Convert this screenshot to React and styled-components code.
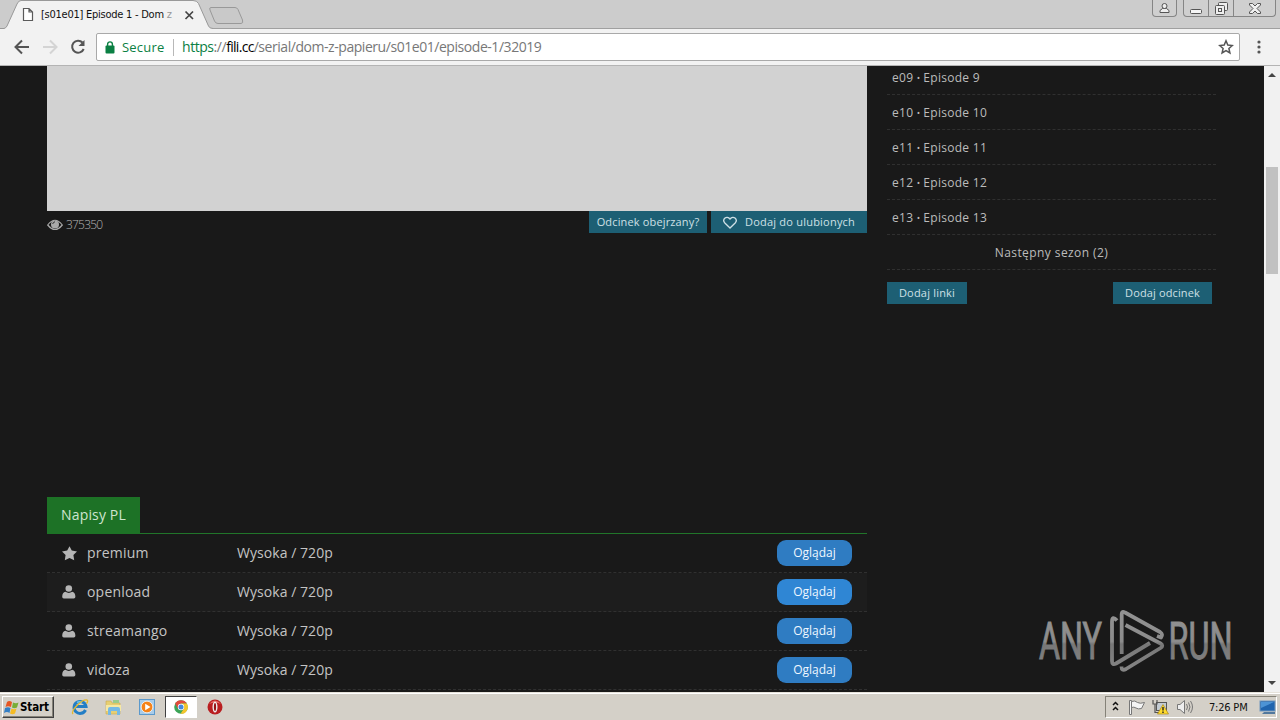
import React from 'react';
import styled, { createGlobalStyle } from 'styled-components';

const GlobalStyle = createGlobalStyle`
  * { box-sizing: border-box; }
  body { margin: 0; overflow: hidden; font-family: "Open Sans", sans-serif; }
  svg { display: block; flex: none; }
`;

const Screen = styled.div`
  width: 1280px;
  height: 720px;
  display: flex;
  flex-direction: column;
  overflow: hidden;
  background: #191919;
`;

/* Browser chrome */
const TabStrip = styled.div`
  position: relative;
  flex: none;
  height: 29px;
  display: flex;
  background: #cccccc;
  border-bottom: 1px solid #a0a0a0;
`;
const Tab = styled.div`
  position: relative;
  width: 213px;
  height: 29px;
  flex: none;
  display: flex;
  align-items: center;
  padding: 0 0 0 22px;
`;
const TabShape = styled.svg`
  position: absolute;
  left: 0;
  top: 0;
`;
const TabIcon = styled.svg`
  position: relative;
`;
const TabTitle = styled.span`
  position: relative;
  margin-left: 7px;
  width: 143px;
  white-space: nowrap;
  font: 11px "DejaVu Sans Condensed", "DejaVu Sans", sans-serif;
  letter-spacing: -0.25px;
  color: #111;
`;
const Faded = styled.span`
  color: #999;
`;
const NewTab = styled.svg`
  margin: 5px 0 0 -5px;
`;
const WindowButtons = styled.div`
  margin-left: auto;
  display: flex;
  height: 17px;
  padding-right: 4px;
`;
const WindowButton = styled.div`
  width: ${(p) => p.$w}px;
  height: 17px;
  display: flex;
  align-items: center;
  justify-content: center;
  border: 1px solid #858585;
  border-top: 0;
  border-left-width: ${(p) => (p.$joined ? 0 : 1)}px;
  border-radius: ${(p) => p.$radius || '0'};
  margin-right: ${(p) => p.$gap || 0}px;
  background: #cfcfcf;
`;

const Toolbar = styled.div`
  flex: none;
  height: 37px;
  display: flex;
  align-items: center;
  padding: 0 14px 0 13px;
  background: #f2f2f2;
  border-bottom: 1px solid #b4b4b4;
`;
const NavIcons = styled.div`
  display: flex;
  gap: 10px;
  width: 83px;
`;
const Omnibox = styled.div`
  width: 1144px;
  height: 28px;
  display: flex;
  align-items: center;
  padding: 0 5px 0 8px;
  background: #fff;
  border: 1px solid #a9a9a9;
  border-radius: 2px;
  font: 14px/18px "Open Sans", sans-serif;
`;
const Secure = styled.span`
  margin: -1px 0 0 7px;
  width: 51px;
  font-size: 13px;
  letter-spacing: 0.2px;
  color: #0b8043;
`;
const Separator = styled.i`
  width: 1px;
  height: 17px;
  background: #b8b8b8;
`;
const Url = styled.span`
  margin: -1px 0 0 8px;
  flex: 1;
  color: #777;
  white-space: nowrap;
  letter-spacing: -0.45px;
`;
const Scheme = styled.span`
  color: #0b8043;
`;
const Host = styled.span`
  color: #000;
  letter-spacing: -0.7px;
`;
const MenuIcon = styled.svg`
  margin-left: 17px;
`;

/* Page */
const Viewport = styled.div`
  flex: none;
  height: 626px;
  display: flex;
  overflow: hidden;
`;
const Page = styled.div`
  position: relative;
  width: 1264px;
  height: 626px;
  display: flex;
  gap: 20px;
  padding-left: 47px;
  overflow: hidden;
  background: #191919;
`;
const Main = styled.main`
  width: 820px;
  flex: none;
`;
const Player = styled.div`
  height: 145px;
  background: #d2d2d2;
`;
const PlayerBar = styled.div`
  height: 286px;
  display: flex;
  align-items: flex-start;
`;
const Views = styled.div`
  margin: 5px auto 0 0;
  display: flex;
  align-items: center;
  gap: 3px;
  color: #b4b4b4;
  font: 300 12px/18px "Open Sans", sans-serif;
  letter-spacing: -0.8px;
`;
const TealButton = styled.div`
  width: ${(p) => p.$w}px;
  height: 22px;
  margin-left: ${(p) => p.$ml || 0}px;
  padding-bottom: 2px;
  display: flex;
  align-items: center;
  justify-content: center;
  gap: 8px;
  background: #1d5f74;
  color: #cfe0e6;
  font-size: 11px;
  letter-spacing: ${(p) => p.$ls || 0}px;
  white-space: nowrap;
`;
const HeartIcon = styled.svg`
  margin-top: 2px;
`;
const Tabs = styled.div`
  height: 37px;
  display: flex;
  border-bottom: 1px solid #21752a;
`;
const LanguageTab = styled.div`
  width: 93px;
  height: 37px;
  padding-bottom: 2px;
  display: flex;
  align-items: center;
  justify-content: center;
  background: #1d7226;
  color: #cfe5cf;
  font-size: 14px;
  letter-spacing: 0.15px;
`;
const SourceRow = styled.div`
  height: 39px;
  display: flex;
  align-items: center;
  padding: 0 15px;
  border-bottom: 1px dashed #303030;
  background: ${(p) => (p.$alt ? '#1d1d1d' : 'transparent')};
  color: #c4c4c4;
  font-size: 14px;
`;
const SourceName = styled.span`
  margin: -2px 0 0 10px;
  width: 150px;
  letter-spacing: 0.2px;
`;
const Quality = styled.span`
  flex: 1;
  margin-top: -2px;
  letter-spacing: 0.05px;
`;
const WatchButton = styled.div`
  width: 75px;
  height: 26px;
  border-radius: 9px;
  padding-bottom: 1px;
  display: flex;
  align-items: center;
  justify-content: center;
  background: ${(p) => (p.$bright ? '#2f86d4' : '#2f7cc2')};
  color: #f0f7ff;
  font-size: 12px;
`;

const Sidebar = styled.aside`
  width: 329px;
  flex: none;
  margin-top: -6px;
`;
const Episode = styled.div`
  height: 35px;
  display: flex;
  align-items: center;
  justify-content: ${(p) => (p.$center ? 'center' : 'flex-start')};
  padding: 0 0 0 ${(p) => (p.$center ? 0 : 5)}px;
  border-bottom: 1px dashed #303030;
  color: #bcbcbc;
  font-size: 12px;
  letter-spacing: ${(p) => (p.$center ? 0.42 : 0.28)}px;
  white-space: pre;
`;
const Bullet = styled.span`
  font-size: 9px;
  letter-spacing: -0.2px;
`;
const SidebarActions = styled.div`
  display: flex;
  justify-content: space-between;
  padding: 12px 4px 0 0;
`;
const Watermark = styled.svg`
  position: absolute;
  left: 1034px;
  top: 540px;
`;
const ScrollTrack = styled.div`
  width: 16px;
  height: 626px;
  display: flex;
  flex-direction: column;
  align-items: center;
  justify-content: space-between;
  background: #f1f1f1;
  padding: 7px 0 7px;
`;
const ScrollThumb = styled.div`
  width: 12px;
  height: 107px;
  margin: 90px 0 auto;
  background: #c1c1c1;
`;

/* Taskbar */
const Taskbar = styled.div`
  flex: none;
  height: 28px;
  display: flex;
  align-items: center;
  padding: 2px 3px 0 2px;
  background: #d4d0c8;
  box-shadow: inset 0 1px #e6e2da, inset 0 2px #fff;
`;
const StartButton = styled.div`
  width: 52px;
  height: 22px;
  display: flex;
  align-items: center;
  padding-left: 1px;
  gap: 1px;
  background: #d4d0c8;
  border: 1px solid;
  border-color: #fff #404040 #404040 #fff;
  box-shadow: inset -1px -1px #858278;
  font: bold 11.5px "DejaVu Sans Condensed", "DejaVu Sans", sans-serif;
  letter-spacing: -0.1px;
  color: #000;
`;
const QuickLaunch = styled.div`
  display: flex;
  align-items: center;
  margin-left: 17px;
`;
const TaskIcon = styled.div`
  width: ${(p) => (p.$active ? 32 : 18)}px;
  height: 22px;
  margin-right: ${(p) => p.$gap}px;
  display: flex;
  align-items: center;
  justify-content: center;
  background: ${(p) => (p.$active ? '#fff' : 'transparent')};
  border: ${(p) => (p.$active ? '1px solid' : '0')};
  border-color: #404040 #fff #fff #404040;
`;
const Tray = styled.div`
  width: 172px;
  height: 22px;
  margin-left: auto;
  display: flex;
  align-items: center;
  padding-left: 6px;
  border: 1px solid;
  border-color: #858278 #fff #fff #858278;
`;
const TrayIcon = styled.svg`
  margin-left: ${(p) => p.$ml}px;
`;
const Clock = styled.span`
  width: 51px;
  margin-left: 15px;
  font: 11px "DejaVu Sans Condensed", "DejaVu Sans", sans-serif;
  letter-spacing: -0.2px;
  white-space: nowrap;
  color: #111;
`;

const UserIcon = () => (
  <svg width="15" height="14" viewBox="0 0 15 14" fill="#b5b5b5">
    <circle cx="6.800" cy="3.500" r="3.300" />
    <path d="M.2 11.800C.2 8.500 1.500 7.300 3.400 6.800Q6.800 9 10.200 6.800C12.100 7.300 13.400 8.500 13.400 11.800Q13.400 13.500 11.800 13.500H1.800Q.2 13.500 .2 11.800Z" />
  </svg>
);
const StarIcon = () => (
  <svg width="15" height="15" viewBox="0 0 15 15" fill="#b5b5b5">
    <path d="M7.5 .2L9.800 4.600L15 5.400L11.400 9L12.200 14.200L7.500 11.900L2.800 14.200L3.600 9L0 5.400L5.200 4.600Z" />
  </svg>
);
const Arrow = ({ up }) => (
  <svg width="8" height="4" viewBox="0 0 8 4">
    <path d={up ? 'M0 4L4 0L8 4Z' : 'M0 0L4 4L8 0Z'} fill="#454545" />
  </svg>
);

const episodes = [9, 10, 11, 12, 13];
const sources = ['premium', 'openload', 'streamango', 'vidoza'];

function BrowserTabs() {
  return (
    <TabStrip>
      <Tab>
        <TabShape width="214" height="29">
          <path d="M0 28.5H4Q6 28 7 26L17 4Q18.500 .5 21 .5H193Q197 .5 198.500 3.500L208.500 26Q209.500 28.500 213 28.500V29H0Z" fill="#f2f2f2" />
          <path d="M0 28.5H4Q6 28 7 26L17 4Q18.500 .5 21 .5H193Q197 .5 198.500 3.500L208.500 26Q209.500 28.500 213 28.500" fill="none" stroke="#999" />
        </TabShape>
        <TabIcon width="12" height="15" viewBox="0 0 12 15" fill="#fff" stroke="#5a5a5a" strokeWidth="1.2">
          <path d="M1.500 1.500H7L10.500 5V13.500H1.500ZM7 1.500V5H10.500" />
        </TabIcon>
        <TabTitle>[s01e01] Episode 1 - Dom <Faded>z</Faded></TabTitle>
        <TabIcon width="10" height="10" viewBox="0 0 10 10">
          <path d="M1.500 1.500L9 9M9 1.500L1.500 9" stroke="#444" strokeWidth="1.7" />
        </TabIcon>
      </Tab>
      <NewTab width="37" height="20">
        <path d="M3 2.500H27Q29 2.500 30 4.500L34.500 15Q35.500 18.500 33 18.500H10Q7.500 18.500 6.500 16L2 5Q1 2.500 3 2.500Z" fill="#c9c9c9" stroke="#999" />
      </NewTab>
      <WindowButtons>
        <WindowButton $w={25} $gap={6} $radius="0 0 4px 4px">
          <svg width="11" height="12" viewBox="0 0 11 12" fill="#eee" stroke="#555">
            <path d="M1 10.500V8.500L3.500 6.500H7.500L10 8.500V10.500Z" />
            <circle cx="5.500" cy="4" r="2.500" />
          </svg>
        </WindowButton>
        <WindowButton $w={26} $radius="0 0 0 4px">
          <svg width="12" height="12"><rect x=".5" y="7.500" width="11" height="4" rx="1" fill="#f4f4f4" stroke="#555" /></svg>
        </WindowButton>
        <WindowButton $w={25} $joined>
          <svg width="13" height="13" fill="#eee" stroke="#555">
            <rect x="3.500" y=".5" width="9" height="8" rx="1" />
            <rect x=".5" y="3.500" width="9" height="9" rx="1" />
            <rect x="3.500" y="6.500" width="3" height="3" />
          </svg>
        </WindowButton>
        <WindowButton $w={42} $joined $radius="0 0 4px 0">
          <svg width="12" height="11" viewBox="0 0 12 11">
            <path d="M.5 .5H3.500L6 3L8.500 .5H11.500V2L8 5.500L11.500 9V10.500H8.500L6 8L3.500 10.500H.5V9L4 5.500L.5 2Z" fill="#f0f0f0" stroke="#555" />
          </svg>
        </WindowButton>
      </WindowButtons>
    </TabStrip>
  );
}

function AddressBar() {
  return (
    <Toolbar>
      <NavIcons>
        <svg width="18" height="18" fill="none" stroke="#555" strokeWidth="2"><path d="M16 9H3M9 2.500L2.500 9L9 15.500" /></svg>
        <svg width="18" height="18" fill="none" stroke="#d4d4d4" strokeWidth="2"><path d="M2 9H15M9 2.500L15.500 9L9 15.500" /></svg>
        <svg width="18" height="18" fill="none" stroke="#555" strokeWidth="2"><path d="M13.500 4.500A6 6 0 1 0 14.700 11" /><path d="M15.500 2V8H9.500Z" fill="#555" stroke="none" /></svg>
      </NavIcons>
      <Omnibox>
        <svg width="10" height="13" viewBox="0 0 10 13">
          <rect x=".5" y="4.500" width="9" height="8" rx="1" fill="#0b8043" />
          <path d="M2.600 5V3.300A2.400 2.400 0 0 1 7.400 3.300V5" fill="none" stroke="#0b8043" strokeWidth="1.400" />
        </svg>
        <Secure>Secure</Secure>
        <Separator />
        <Url><Scheme>https</Scheme>://<Host>fili.cc</Host>/serial/dom-z-papieru/s01e01/episode-1/32019</Url>
        <svg width="16" height="16" viewBox="0 0 16 16"><path d="M8 1.800L9.800 6.100L14.300 6.500L10.900 9.500L11.900 14L8 11.600L4.100 14L5.100 9.500L1.700 6.500L6.200 6.100Z" fill="none" stroke="#555" strokeWidth="1.500" /></svg>
      </Omnibox>
      <MenuIcon width="4" height="14" fill="#555">
        <circle cx="2" cy="2" r="1.600" /><circle cx="2" cy="7" r="1.600" /><circle cx="2" cy="12" r="1.600" />
      </MenuIcon>
    </Toolbar>
  );
}

function AnyRunMark() {
  return (
    <Watermark width="222" height="75">
      <defs>
        <linearGradient id="metal" gradientUnits="userSpaceOnUse" x1="0" y1="5" x2="0" y2="64">
          <stop offset="0" stopColor="#929292" />
          <stop offset=".52" stopColor="#8c8c8c" />
          <stop offset=".56" stopColor="#777" />
          <stop offset="1" stopColor="#858585" />
        </linearGradient>
      </defs>
      <g fill="url(#metal)" fontFamily="Roboto, sans-serif" fontSize="51" fontWeight="400" stroke="url(#metal)" strokeWidth="1">
        <text x="5" y="53" textLength="63" lengthAdjust="spacingAndGlyphs">ANY</text>
        <text x="134.500" y="53" textLength="64" lengthAdjust="spacingAndGlyphs">RUN</text>
      </g>
      <g fill="none" stroke="url(#metal)" strokeWidth="3.800" strokeLinejoin="round">
        <path d="M83 14.500Q78 9 78 16V55Q78 59.500 82 57.500L116 37" />
        <path d="M87.700 48V8Q87.700 4.500 91 6.500L126 26Q129.500 28.500 127 31.500L123 30" />
        <path d="M91.500 19L126.500 37.500Q130 39.500 126.500 42L92 63Q87.500 65.500 87.500 60.500" />
      </g>
    </Watermark>
  );
}

function WindowsTaskbar() {
  return (
    <Taskbar>
      <StartButton>
        <svg width="15" height="15" viewBox="0 0 15 15">
          <path d="M3 2Q5 0 8 2L7 7Q4 5.500 1.500 7Z" fill="#e65622" />
          <path d="M9 2.500Q12 4 14.500 2.500L13 7.500Q10 9 8 7.500Z" fill="#77ad36" />
          <path d="M1 8Q4 6.500 6.500 8L5.500 13Q3 11 0 13Z" fill="#347fc5" />
          <path d="M7.500 8.500Q10 10 12.500 8.500L11 13.500Q8.500 15 6 13.500Z" fill="#f5bb23" />
        </svg>
        Start
      </StartButton>
      <QuickLaunch>
        <TaskIcon $gap={15}>
          <svg width="18" height="18" viewBox="0 0 18 18" fill="none">
            <path d="M14.500 12A6 6 0 1 1 15 8.500H5" stroke="#237ec5" strokeWidth="3" />
            <path d="M6 4.500A5 5 0 0 1 11 4.500" stroke="#67c5ef" strokeWidth="1.500" />
            <path d="M2 16C-1 13 11 1 16 2Q17.500 3 15.500 5.500" stroke="#e5b82b" strokeWidth="1.300" />
          </svg>
        </TaskIcon>
        <TaskIcon $gap={16}>
          <svg width="17" height="17" viewBox="0 0 17 17">
            <path d="M1 2H6L7 4H15V15H1Z" fill="#e7cf72" stroke="#c9aa4d" strokeWidth=".6" />
            <path d="M8 1H14V4H8Z" fill="#9acb8b" />
            <path d="M1 6H16V12H1Z" fill="#f6e8a2" />
            <path d="M3 16V10Q3 8 5 8H13Q15 8 15 10V16H12V12H6V16Z" fill="#75b9e5" />
          </svg>
        </TaskIcon>
        <TaskIcon $gap={9}>
          <svg width="17" height="17" viewBox="0 0 17 17">
            <rect x=".5" y=".5" width="15" height="15" fill="#a8cce9" stroke="#5b99cc" />
            <circle cx="8" cy="8" r="5.800" fill="#f58218" stroke="#fff" strokeWidth=".7" />
            <path d="M6.200 4.800L11.500 8L6.200 11.200Z" fill="#fff" />
          </svg>
        </TaskIcon>
        <TaskIcon $active $gap={9}>
          <svg width="14" height="14" viewBox="0 0 14 14">
            <circle cx="7" cy="7" r="6.800" fill="#3ba457" />
            <path d="M1.100 3.600A6.800 6.800 0 0 1 12.900 3.600H7L4 8.700Z" fill="#e14a3c" />
            <path d="M12.900 3.600A6.800 6.800 0 0 1 6.500 13.800L10 8.500L7 3.600Z" fill="#f4c52c" />
            <circle cx="7" cy="7" r="3.200" fill="#fff" /><circle cx="7" cy="7" r="2.500" fill="#4388dd" />
          </svg>
        </TaskIcon>
        <TaskIcon $gap={0}>
          <svg width="16" height="16" viewBox="0 0 16 16">
            <circle cx="8" cy="8" r="7.500" fill="#b91e20" />
            <path d="M2 5Q8 -2 14 5Q8 2 2 5Z" fill="#e66b67" />
            <ellipse cx="8" cy="8" rx="2.500" ry="5.500" fill="#eee" /><ellipse cx="8" cy="8" rx="1.100" ry="4" fill="#951315" />
          </svg>
        </TaskIcon>
      </QuickLaunch>
      <Tray>
        <svg width="7" height="12" fill="none" stroke="#111" strokeWidth="1.500"><path d="M1 4L3.500 1.500L6 4M1 9L3.500 6.500L6 9" /></svg>
        <TrayIcon $ml={9} width="18" height="17" viewBox="0 0 18 17" fill="#f4f4f4" stroke="#777">
          <path d="M1.500 1.500H3.500V15.500H1.500Z" /><path d="M3.500 2.500Q7 1 9.500 3.500Q12 5 16.500 3.500L13.500 9.500Q10 10.500 8 9Q6 7.500 3.500 8.500Z" />
        </TrayIcon>
        <TrayIcon $ml={6} width="18" height="17" viewBox="0 0 18 17">
          <rect x="4.500" y="3.500" width="10" height="8" fill="#c3cbd3" stroke="#555" />
          <path d="M1 1V5H5V1M3 5V13.500H10" fill="none" stroke="#555" strokeWidth="1.200" />
          <path d="M11 5.500L16.500 15H5.500Z" fill="#ffdb2c" stroke="#ab8617" strokeWidth=".7" /><path d="M11 8V11.500M11 12.500V14" stroke="#222" strokeWidth="1.400" />
        </TrayIcon>
        <TrayIcon $ml={6} width="18" height="16" viewBox="0 0 18 16" fill="none" stroke="#777">
          <path d="M1.500 5.500H4L8.500 1.500V14.500L4 10.500H1.500Z" fill="#eee" /><path d="M10.500 5Q12.500 8 10.500 11M12.500 3.500Q15.500 8 12.500 12.500M14.500 2Q18.500 8 14.500 14" />
        </TrayIcon>
        <Clock>7:26 PM</Clock>
        <svg width="17" height="16" viewBox="0 0 17 16">
          <rect x="1" y="2" width="15" height="10" fill="#1f64ae" stroke="#7297bd" /><path d="M2 3H15L2 9Z" fill="#4c93d5" /><path d="M5 13H16V15H3Z" fill="#52789d" />
        </svg>
      </Tray>
    </Taskbar>
  );
}

export default function App() {
  return (
    <Screen>
      <GlobalStyle />
      <BrowserTabs />
      <AddressBar />
      <Viewport>
        <Page>
          <Main>
            <Player />
            <PlayerBar>
              <Views>
                <svg width="16" height="12" viewBox="0 0 16 12">
                  <path d="M.7 6Q8 -3.500 15.300 6Q8 15 .7 6Z" fill="none" stroke="#aaa" strokeWidth="1.200" />
                  <circle cx="8" cy="5.500" r="4" fill="#aaa" /><path d="M5.700 5Q6 3 8 2.800" fill="none" stroke="#333" />
                </svg>
                375350
              </Views>
              <TealButton $w={118} $ls={0.15}>Odcinek obejrzany?</TealButton>
              <TealButton $w={156} $ml={4} $ls={0.22}>
                <HeartIcon width="14" height="13" viewBox="0 0 14 13"><path d="M7 12L1.600 6.700C-1 3.500 3.500 -1.200 7 3C10.500 -1.200 15 3.500 12.400 6.700Z" fill="none" stroke="#cfe0e6" strokeWidth="1.300" /></HeartIcon>
                Dodaj do ulubionych
              </TealButton>
            </PlayerBar>
            <Tabs><LanguageTab>Napisy PL</LanguageTab></Tabs>
            {sources.map((name, i) => (
              <SourceRow key={name} $alt={i === 1}>
                {i === 0 ? <StarIcon /> : <UserIcon />}
                <SourceName>{name}</SourceName>
                <Quality>Wysoka / 720p</Quality>
                <WatchButton $bright={i === 1}>Oglądaj</WatchButton>
              </SourceRow>
            ))}
          </Main>
          <Sidebar>
            {episodes.map((n) => (
              <Episode key={n}>e{String(n).padStart(2, '0')} <Bullet>•</Bullet> Episode {n}</Episode>
            ))}
            <Episode $center>Następny sezon (2)</Episode>
            <SidebarActions>
              <TealButton $w={80} $ls={0.2}>Dodaj linki</TealButton>
              <TealButton $w={99} $ls={0.13}>Dodaj odcinek</TealButton>
            </SidebarActions>
          </Sidebar>
          <AnyRunMark />
        </Page>
        <ScrollTrack><Arrow up /><ScrollThumb /><Arrow /></ScrollTrack>
      </Viewport>
      <WindowsTaskbar />
    </Screen>
  );
}
